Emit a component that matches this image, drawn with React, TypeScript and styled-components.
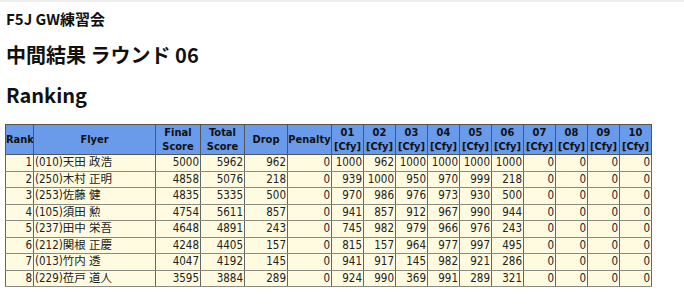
import React from "react";
import styled, { createGlobalStyle } from "styled-components";

type Row = {
	rank: number;
	flyer: string;
	final: number;
	total: number;
	drop: number;
	penalty: number;
	rounds: number[];
};

const rows: Row[] = [
	{ rank: 1, flyer: "(010)天田 政浩", final: 5000, total: 5962, drop: 962, penalty: 0, rounds: [1000, 962, 1000, 1000, 1000, 1000, 0, 0, 0, 0] },
	{ rank: 2, flyer: "(250)木村 正明", final: 4858, total: 5076, drop: 218, penalty: 0, rounds: [939, 1000, 950, 970, 999, 218, 0, 0, 0, 0] },
	{ rank: 3, flyer: "(253)佐藤 健", final: 4835, total: 5335, drop: 500, penalty: 0, rounds: [970, 986, 976, 973, 930, 500, 0, 0, 0, 0] },
	{ rank: 4, flyer: "(105)須田 勲", final: 4754, total: 5611, drop: 857, penalty: 0, rounds: [941, 857, 912, 967, 990, 944, 0, 0, 0, 0] },
	{ rank: 5, flyer: "(237)田中 栄吾", final: 4648, total: 4891, drop: 243, penalty: 0, rounds: [745, 982, 979, 966, 976, 243, 0, 0, 0, 0] },
	{ rank: 6, flyer: "(212)関根 正慶", final: 4248, total: 4405, drop: 157, penalty: 0, rounds: [815, 157, 964, 977, 997, 495, 0, 0, 0, 0] },
	{ rank: 7, flyer: "(013)竹内 透", final: 4047, total: 4192, drop: 145, penalty: 0, rounds: [941, 917, 145, 982, 921, 286, 0, 0, 0, 0] },
	{ rank: 8, flyer: "(229)莅戸 道人", final: 3595, total: 3884, drop: 289, penalty: 0, rounds: [924, 990, 369, 991, 289, 321, 0, 0, 0, 0] },
];

const roundNames = ["01", "02", "03", "04", "05", "06", "07", "08", "09", "10"];

const Global = createGlobalStyle`
body {
	margin: 0;
	background: #fff;
	font-family: "DejaVu Sans Condensed", "DejaVu Sans", "Noto Sans CJK JP", sans-serif;
}
`;

const Page = styled.div`
	padding: 8px 0 0 6px;
	border-top: 2px solid #eeeeee;
`;

const Title = styled.div`
	font-family: "Noto Sans CJK JP", sans-serif;
	font-weight: bold;
	font-size: 15px;
	line-height: 18px;
	color: #111;
`;

const SubTitle = styled.h2`
	margin: 14px 0 0;
	font-family: "Noto Sans CJK JP", sans-serif;
	font-weight: bold;
	font-size: 20px;
	line-height: 26px;
	color: #111;
`;

const Heading = styled.h2`
	margin: 13px 0 0;
	font-family: "Noto Sans CJK JP", sans-serif;
	font-weight: bold;
	font-size: 20px;
	line-height: 28px;
	color: #111;
`;

const Table = styled.table`
	margin: 15px 0 0 -1px;
	width: 647px;
	border-collapse: collapse;
	border: 1px solid #555;
	font-size: 11px;
	table-layout: fixed;
`;

const Col = styled.col<{ w: number }>`
	width: ${(p) => p.w}px;
`;

const Th = styled.th`
	background: #6a9aea;
	border: 1px solid #555;
	padding: 0;
	height: 29px;
	font-size: 11px;
	line-height: 14px;
	font-weight: bold;
	color: #111;
	text-align: center;
	white-space: nowrap;
	overflow: hidden;
`;

const Td = styled.td<{ left?: boolean }>`
	background: #fffbe0;
	border: 1px solid #666;
	border-bottom-color: #8a8a80;
	padding: 0 1px 0 1px;
	height: 15.5px;
	line-height: 15.5px;
	font-size: 11.5px;
	color: #222;
	text-align: ${(p) => (p.left ? "left" : "right")};
	white-space: nowrap;
	overflow: hidden;
	font-family: "DejaVu Sans Condensed", "Noto Sans CJK JP", sans-serif;
`;

const App: React.FC = () => {
	return (
		<>
			<Global />
			<Page>
				<Title>F5J GW練習会</Title>
				<SubTitle>中間結果 ラウンド 06</SubTitle>
				<Heading>Ranking</Heading>
				<Table>
					<colgroup>
						<Col w={28} />
						<Col w={122} />
						<Col w={45} />
						<Col w={44} />
						<Col w={43} />
						<Col w={44} />
						{roundNames.map((r) => (
							<Col key={r} w={32} />
						))}
					</colgroup>
					<thead>
						<tr>
							<Th>Rank</Th>
							<Th>Flyer</Th>
							<Th>Final<br />Score</Th>
							<Th>Total<br />Score</Th>
							<Th>Drop</Th>
							<Th>Penalty</Th>
							{roundNames.map((r) => (
								<Th key={r}>{r}<br />[Cfy]</Th>
							))}
						</tr>
					</thead>
					<tbody>
						{rows.map((row) => (
							<tr key={row.rank}>
								<Td>{row.rank}</Td>
								<Td left>{row.flyer}</Td>
								<Td>{row.final}</Td>
								<Td>{row.total}</Td>
								<Td>{row.drop}</Td>
								<Td>{row.penalty}</Td>
								{row.rounds.map((s, i) => (
									<Td key={i}>{s}</Td>
								))}
							</tr>
						))}
					</tbody>
				</Table>
			</Page>
		</>
	);
};

export default App;
